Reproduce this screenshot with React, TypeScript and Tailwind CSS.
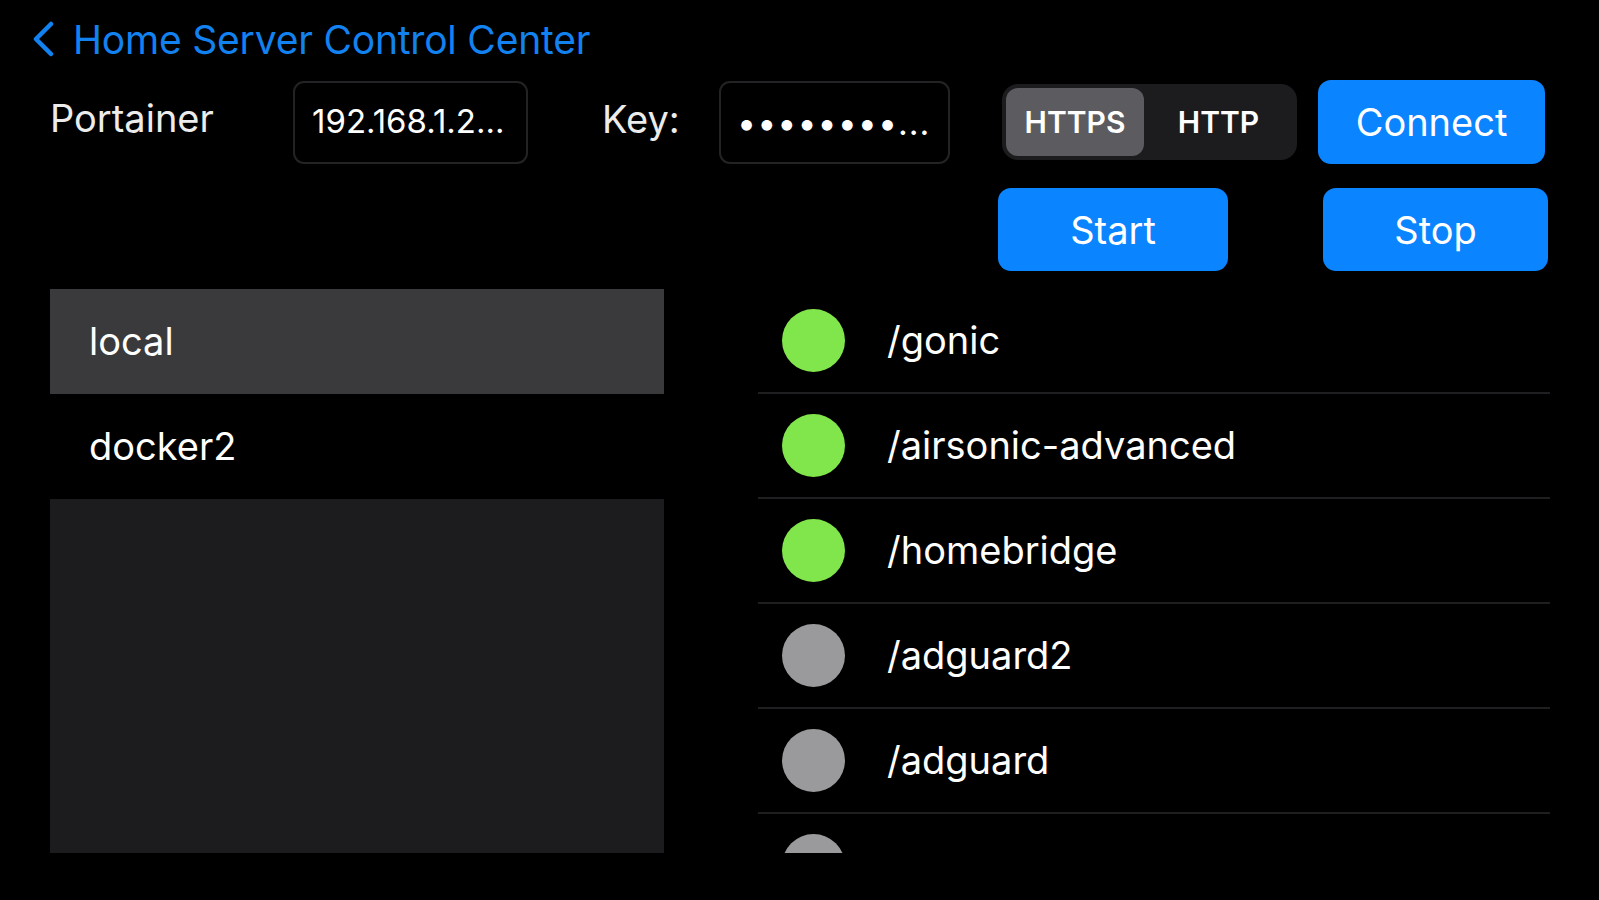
type Container = { name: string; running: boolean };

const containers: Container[] = [
  { name: "/gonic", running: true },
  { name: "/airsonic-advanced", running: true },
  { name: "/homebridge", running: true },
  { name: "/adguard2", running: false },
  { name: "/adguard", running: false },
  { name: "", running: false },
];

const endpoints = ["local", "docker2"];

function BlueButton({ label, className }: { label: string; className?: string }) {
  return (
    <button
      className={
        "flex h-[83px] items-center justify-center rounded-[13px] bg-[#0a84ff] text-[38px] leading-none text-white " +
        (className ?? "")
      }
    >
      {label}
    </button>
  );
}

export default function App() {
  return (
    <div
      className="h-[900px] w-full overflow-hidden bg-black text-[#ececec]"
      style={{ fontFamily: "Inter, 'Noto Sans', sans-serif" }}
    >
      {/* nav */}
      <div className="box-content flex h-[46px] items-center pl-[31px] pt-[16px] text-[#1282f0]">
        <svg width="24" height="36" viewBox="0 0 24 36" fill="none">
          <path
            d="M20 3 L5 18 L20 33"
            stroke="currentColor"
            strokeWidth="4.5"
            strokeLinecap="round"
            strokeLinejoin="round"
          />
        </svg>
        <span className="ml-[18px] text-[39px] leading-none tracking-[-0.2px]">
          Home Server Control Center
        </span>
      </div>

      {/* connection row */}
      <div className="mt-[18px] flex h-[84px] items-center pl-[50px]">
        <span className="mb-[8px] w-[243px] text-[38px] leading-none">Portainer</span>
        <div className="flex h-[83px] w-[235px] items-center rounded-[11px] border-2 border-[#232325] pl-[17px] text-[33px] text-white">
          192.168.1.2...
        </div>
        <span className="mb-[6px] ml-[74px] w-[117px] text-[38px] leading-none">Key:</span>
        <div className="flex h-[83px] w-[231px] items-center rounded-[11px] border-2 border-[#232325] pl-[16px] text-[34px] tracking-[1px] text-white">
          ••••••••...
        </div>
        <div className="ml-[52px] flex h-[76px] w-[295px] items-center rounded-[16px] bg-[#1c1c1e] p-[4px]">
          <div className="flex h-full w-[138px] items-center justify-center rounded-[12px] bg-[#5c5c60] text-[30px] font-semibold text-white">
            HTTPS
          </div>
          <div className="flex h-full flex-1 items-center justify-center text-[30px] font-semibold text-white">
            HTTP
          </div>
        </div>
        <BlueButton label="Connect" className="ml-[21px] h-[84px] w-[227px]" />
      </div>

      {/* actions */}
      <div className="mt-[24px] flex h-[83px] pl-[998px]">
        <BlueButton label="Start" className="w-[230px]" />
        <BlueButton label="Stop" className="ml-[95px] w-[225px]" />
      </div>

      {/* lists */}
      <div className="mt-[18px] flex h-[564px] pl-[50px]">
        <div className="flex w-[614px] flex-col bg-[#1c1c1e]">
          {endpoints.map((e, i) => (
            <div
              key={e}
              className={
                "flex h-[105px] shrink-0 items-center pl-[39px] text-[38px] text-white " +
                (i === 0 ? "bg-[#3a3a3c]" : "bg-black")
              }
            >
              {e}
            </div>
          ))}
        </div>

        <div className="ml-[94px] flex w-[792px] flex-col overflow-hidden">
          {containers.map((c, i) => (
            <div
              key={i}
              className="flex h-[105px] shrink-0 items-center border-b-2 border-[#1f1f21] pl-[24px]"
            >
              <span
                className={
                  "h-[63px] w-[63px] shrink-0 rounded-full " +
                  (c.running ? "bg-[#80e64b]" : "bg-[#9a9a9c]")
                }
              />
              {c.name && (
                <span className="ml-[42px] text-[38px] text-white">{c.name}</span>
              )}
            </div>
          ))}
        </div>
      </div>
    </div>
  );
}
